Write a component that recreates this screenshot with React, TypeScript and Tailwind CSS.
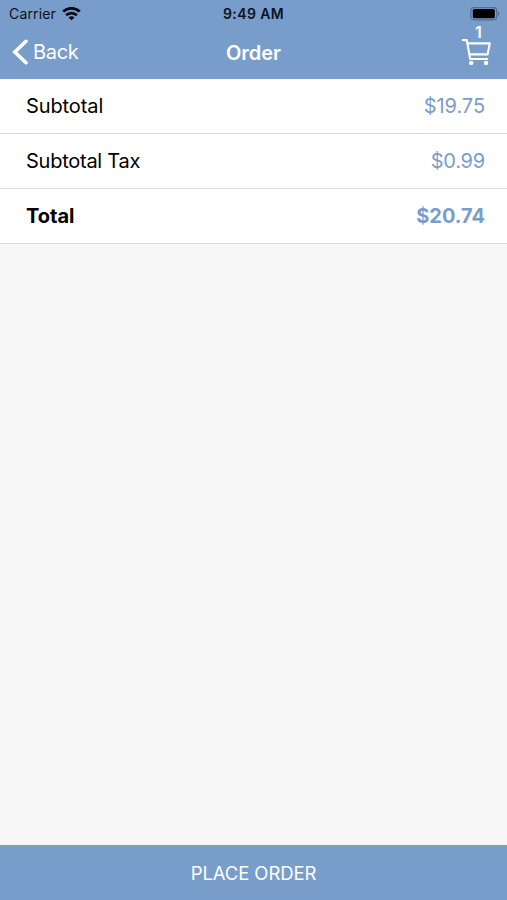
const rows = [
  { label: "Subtotal", amount: "$19.75", labelClass: "tracking-[-0.1px]", amountClass: "tracking-[-0.05px]" },
  { label: "Subtotal Tax", amount: "$0.99", labelClass: "tracking-[-0.25px]", amountClass: "tracking-[-0.2px]" },
  { label: "Total", amount: "$20.74", labelClass: "font-bold", amountClass: "font-bold" },
];

function WifiIcon() {
  return (
    <svg className="w-[19px] h-[14px]" viewBox="0 0 19 14" fill="none" stroke="#050a12" strokeWidth="2.8">
      <path d="M1.2 4.6C5.7.2 13.3.2 17.8 4.6" />
      <path d="M4.1 8.2c3-2.9 7.8-2.9 10.8 0" />
      <path d="M9.5 13.2 6.5 10.4c1.7-1.5 4.3-1.5 6 0z" fill="#050a12" stroke="none" />
    </svg>
  );
}

function BatteryIcon() {
  return (
    <svg className="w-[30px] h-[14px]" viewBox="0 0 30 14" fill="none">
      <rect x="0.8" y="0.6" width="26" height="12.2" rx="3.2" stroke="#506d96" strokeWidth="1.3" />
      <rect x="2.8" y="2.1" width="22" height="9.2" rx="1.5" fill="#000" />
      <path d="M28 4.5c1.9.7 1.9 3.7 0 4.4z" fill="#506d96" />
    </svg>
  );
}

function CartIcon() {
  return (
    <svg
      className="w-[30px] h-[28px]"
      viewBox="0 0 30 28"
      fill="none"
      stroke="#fff"
      strokeWidth="2.1"
      strokeLinecap="round"
      strokeLinejoin="round"
    >
      <path d="M1.8 2.1H5.8L9.2 21H26.2" />
      <path d="M6.5 5.4H28.8L26.6 16.4H8.4" />
      <circle cx="10.2" cy="24.9" r="2.2" fill="#fff" stroke="none" />
      <circle cx="25" cy="24.9" r="2.2" fill="#fff" stroke="none" />
    </svg>
  );
}

export default function App() {
  return (
    <div className="w-full h-screen flex flex-col bg-[#f7f7f7] font-['Inter',sans-serif] overflow-hidden">
      <header className="h-[79px] shrink-0 bg-[#799dcb]">
        {/* Status bar */}
        <div className="h-[27px] grid grid-cols-3 items-center text-[14px] leading-[27px] text-[#0b1320]">
          <div className="flex items-center gap-[6px] pl-[9px]">
            <span className="tracking-[0.15px]">Carrier</span>
            <WifiIcon />
          </div>
          <span className="text-center font-semibold tracking-[0.4px]">9:49 AM</span>
          <div className="flex justify-end pr-[7px]">
            <BatteryIcon />
          </div>
        </div>

        {/* Navigation bar */}
        <div className="h-[52px] grid grid-cols-3 text-white">
          <button className="h-[50px] flex items-center gap-[5px] pl-[12px] text-[20px] tracking-[-0.3px] text-left">
            <svg className="w-[16px] h-[26px]" viewBox="0 0 16 26" fill="none" stroke="#fff" strokeWidth="3.6">
              <path d="M14 2.3 2.8 13 14 23.7" strokeLinecap="round" />
            </svg>
            <span>Back</span>
          </button>
          <h1 className="h-[50px] leading-[52px] text-center text-[20px] font-semibold">Order</h1>
          <div className="flex justify-end pr-[16px]">
            <button className="relative mt-[11px] h-[28px]">
              <CartIcon />
              <span className="absolute -top-[15px] left-[14px] text-[16px] leading-[18px] font-semibold">1</span>
            </button>
          </div>
        </div>
      </header>

      <ul className="shrink-0">
        {rows.map((row) => (
          <li
            key={row.label}
            className="h-[55px] flex items-center justify-between bg-white border-b border-[#d9d9d9] pl-[26px] pr-[22px] text-[20px]"
          >
            <span className={`text-black ${row.labelClass}`}>{row.label}</span>
            <span className={`text-[#799dcb] ${row.amountClass}`}>{row.amount}</span>
          </li>
        ))}
      </ul>

      <button className="mt-auto h-[55px] shrink-0 bg-[#799dcb] text-white text-[18.5px] tracking-[-0.1px] leading-[57px] text-center">
        PLACE ORDER
      </button>
    </div>
  );
}
